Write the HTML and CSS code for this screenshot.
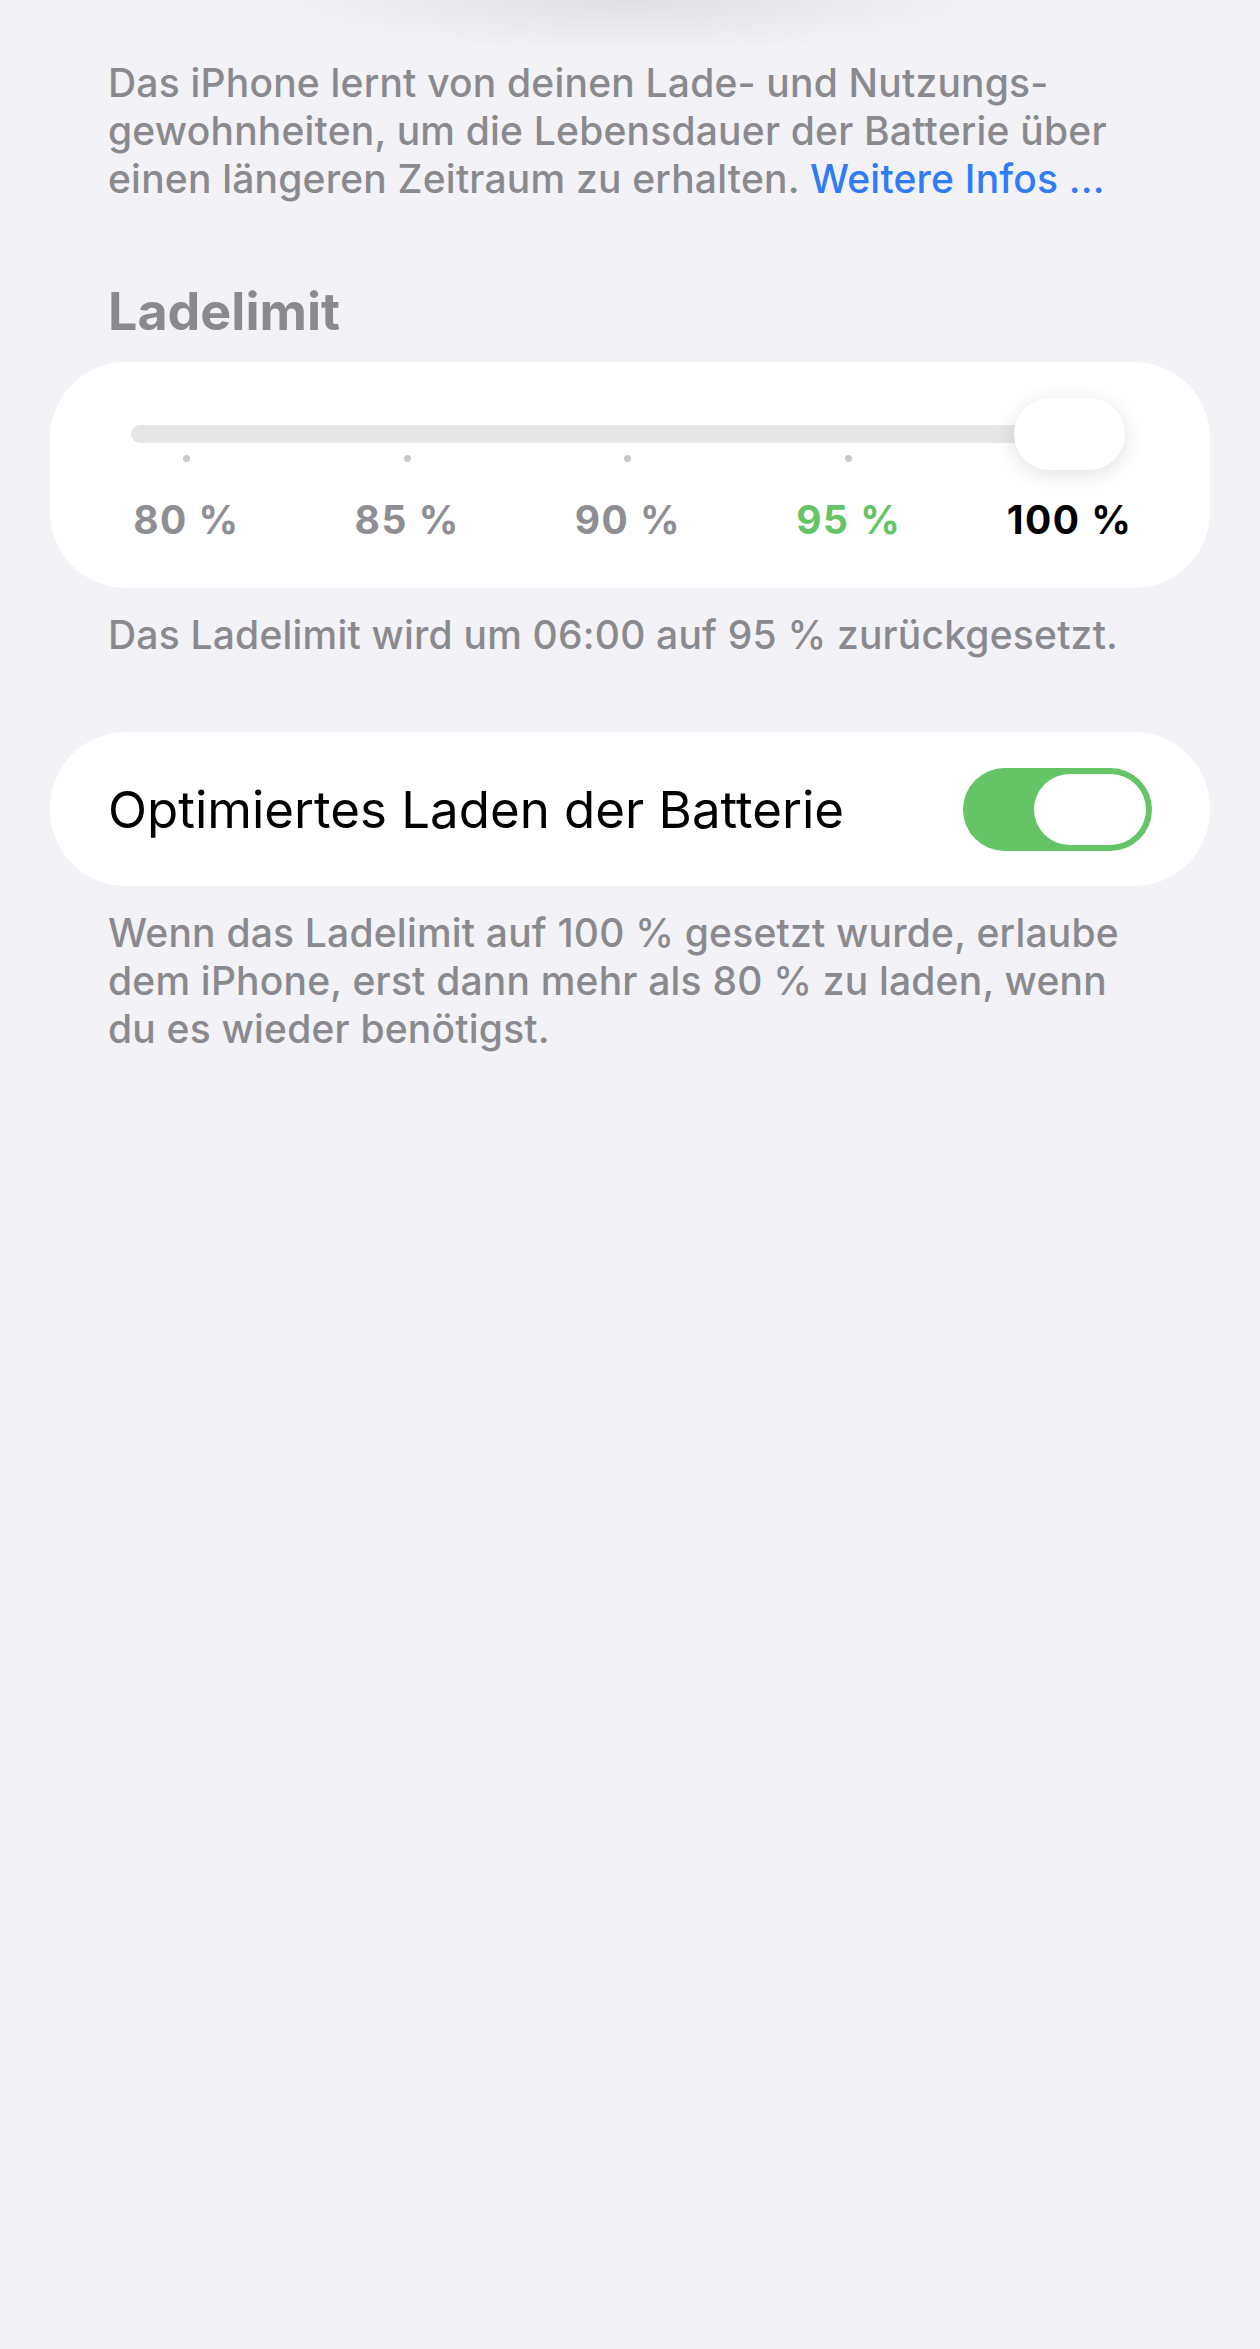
FILE: index.html
```html
<!DOCTYPE html>
<html lang="de">

<head>
    <meta charset="UTF-8">
    <meta name="viewport" content="width=device-width, initial-scale=1.0">
    <title>Batterieladung</title>
    <link rel="stylesheet" href="styles.css">
</head>

<body>
    <!--SCHATTEN DER KARTE OBERHALB (AUSGESCROLLT)-->
    <div class="top-fade"></div>

    <p class="note">Das iPhone lernt von deinen Lade- und Nutzungs-<br>gewohnheiten, um die Lebensdauer der Batterie über<br>einen längeren Zeitraum zu erhalten. <a class="link" href="#">Weitere Infos ...</a></p>

    <!--LADELIMIT-->
    <h2 class="section-title">Ladelimit</h2>
    <div class="card limit-card">
        <div class="slider">
            <div class="track"></div>
            <div class="ticks">
                <span></span>
                <span></span>
                <span></span>
                <span></span>
                <span></span>
            </div>
            <div class="knob"></div>
        </div>
        <div class="labels">
            <span>80 %</span>
            <span>85 %</span>
            <span>90 %</span>
            <span class="green">95 %</span>
            <span class="current">100 %</span>
        </div>
    </div>
    <p class="note after-card">Das Ladelimit wird um 06:00 auf 95 % zurückgesetzt.</p>

    <!--OPTIMIERTES LADEN-->
    <div class="card toggle-card">
        <span class="row-title">Optimiertes Laden der Batterie</span>
        <div class="switch">
            <div class="switch-knob"></div>
        </div>
    </div>
    <p class="note after-card">Wenn das Ladelimit auf 100 % gesetzt wurde, erlaube<br>dem iPhone, erst dann mehr als 80 % zu laden, wenn<br>du es wieder benötigst.</p>
</body>

</html>
```

FILE: styles.css
```css
* {
    box-sizing: border-box;
}

body {
    margin: 0;
    min-height: 100vh;
    background: #f2f2f7;
    font-family: "Inter", "Liberation Sans", sans-serif;
}

.top-fade {
    height: 59px;
    background: radial-gradient(ellipse 400px 52px at 50% 0, rgba(0, 0, 0, 0.08), rgba(0, 0, 0, 0));
}

.note {
    margin: 0;
    padding: 0 108px;
    font-size: 39px;
    font-weight: 500;
    line-height: 48px;
    letter-spacing: 0.2px;
    color: #8a8a8e;
}

.note.after-card {
    margin-top: 23px;
}

.link {
    color: #307bf6;
    text-decoration: none;
}

.section-title {
    margin: 78px 0 19px;
    padding: 0 108px;
    font-size: 52px;
    line-height: 62px;
    font-weight: 700;
    color: #8a8a8e;
}

.card {
    margin: 0 50px;
    background: #fff;
    border-radius: 76px;
}

/* SLIDER */
.limit-card {
    padding: 36px 30px 44px 26px;
}

.slider {
    position: relative;
    height: 72px;
    margin: 0 55px;
}

.track {
    position: absolute;
    left: 0;
    right: 0;
    top: 27px;
    height: 18px;
    border-radius: 9px;
    background: #e6e6e6;
}

.ticks {
    position: absolute;
    left: -55px;
    right: -55px;
    top: 57px;
    display: grid;
    grid-template-columns: repeat(5, 1fr);
    justify-items: center;
}

.ticks span {
    width: 7px;
    height: 7px;
    border-radius: 50%;
    background: #c7c7cc;
}

.knob {
    position: absolute;
    right: 0;
    top: 0;
    width: 111px;
    height: 72px;
    border-radius: 36px;
    background: #fff;
    box-shadow: 0 4px 22px rgba(0, 0, 0, 0.12);
}

.labels {
    display: grid;
    grid-template-columns: repeat(5, 1fr);
    justify-items: center;
    margin-top: 26px;
    font-size: 39px;
    line-height: 48px;
    font-weight: 700;
    letter-spacing: 1.5px;
    color: #8e8e93;
}

.labels .green {
    color: #65c466;
}

.labels .current {
    color: #000;
}

/* SCHALTER */
.toggle-card {
    display: flex;
    align-items: center;
    justify-content: space-between;
    height: 154px;
    margin-top: 73px;
    padding: 0 58px;
}

.row-title {
    font-size: 51px;
    color: #000;
}

.switch {
    display: flex;
    justify-content: flex-end;
    width: 189px;
    height: 83px;
    padding: 6px;
    border-radius: 42px;
    background: #65c466;
}

.switch-knob {
    width: 112px;
    height: 71px;
    border-radius: 36px;
    background: #fff;
}
```
